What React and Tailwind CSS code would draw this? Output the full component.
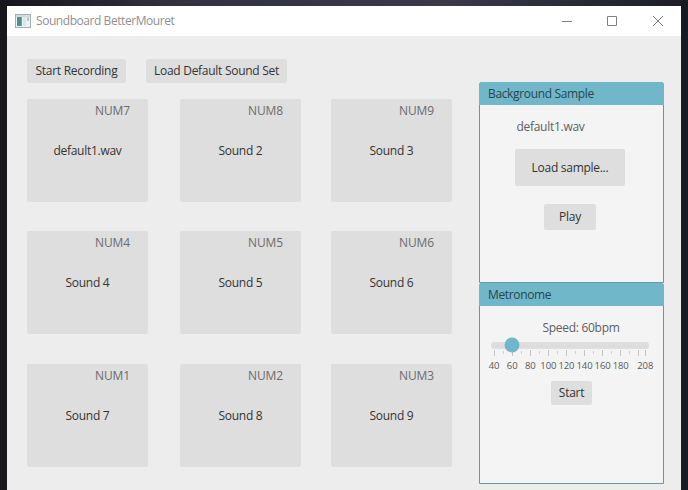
import React from "react";

const PADS = [
  ["NUM7", "default1.wav"],
  ["NUM8", "Sound 2"],
  ["NUM9", "Sound 3"],
  ["NUM4", "Sound 4"],
  ["NUM5", "Sound 5"],
  ["NUM6", "Sound 6"],
  ["NUM1", "Sound 7"],
  ["NUM2", "Sound 8"],
  ["NUM3", "Sound 9"],
];

const LABELS = ["40", "60", "80", "100", "120", "140", "160", "180"];
const MAJOR = [3, 21, 39, 57, 75, 93, 111, 129, 147, 154];
const MINOR = [12, 30, 48, 66, 84, 102, 120, 138];

function Button({ children, className = "" }) {
  return (
    <button
      className={`flex shrink-0 items-center justify-center rounded-[2px] bg-[#dedede] whitespace-nowrap text-[#333] ${className}`}
    >
      {children}
    </button>
  );
}

function TitleBar() {
  return (
    <header className="flex h-[30px] shrink-0 items-center bg-white pb-px pl-2">
      <svg width="16" height="14" viewBox="0 0 16 14" className="shrink-0">
        <rect x="0.5" y="0.5" width="15" height="13" fill="#f0f3f5" stroke="#a8adb3" />
        <rect x="1" y="1" width="14" height="2" fill="#d3dae0" />
        <rect x="2" y="3" width="5" height="9" fill="#4b9291" />
        <rect x="6" y="3" width="1" height="9" fill="#6d9db5" />
        <rect x="8" y="3" width="3" height="9" fill="#dfe6eb" />
        <rect x="12" y="3" width="2" height="4" fill="#b4c6d6" />
      </svg>
      <span className="mt-px ml-[5px] text-[12px] tracking-[-0.44px] text-[#909090]">Soundboard BetterMouret</span>
      <svg width="104" height="12" viewBox="0 0 104 12" className="mr-[17px] ml-auto" fill="none" stroke="#808080">
        <path d="M2 6.5h10M47.500 1.500h9v9h-9zM93 1l10 10M103 1l-10 10" />
      </svg>
    </header>
  );
}

function Panel({ title, children }) {
  return (
    <section className="flex h-[201px] flex-col rounded-t-[3px] border border-[#5c9ca6] bg-[#f4f4f5]">
      <h2 className="-mx-px -mt-px flex h-[23px] shrink-0 items-center rounded-t-[3px] bg-[#70b7c9] pl-[9px] tracking-[-0.35px] text-[#28464e]">
        {title}
      </h2>
      <div className="flex flex-col items-center">{children}</div>
    </section>
  );
}

function Metronome() {
  return (
    <>
      <div className="mt-[14px] ml-[19px] h-4 leading-4 text-[#606060]">Speed: 60bpm</div>
      <div className="mr-[3px] flex w-[158px] flex-col">
        <svg width="158" height="22" viewBox="0 0 158 22">
          <rect x="0" y="6" width="158" height="7" rx="3" fill="#dededf" />
          {MAJOR.map((x) => (
            <path key={x} d={`M${x + 0.5} 14v6`} stroke="#c4c4c8" />
          ))}
          {MINOR.map((x) => (
            <path key={x} d={`M${x + 0.5} 15v3`} stroke="#d4d4d8" />
          ))}
          <circle cx="21" cy="9" r="7.500" fill="#70b7c9" />
        </svg>
        <div className="mt-[2px] -mr-2 -ml-[6px] flex h-3 items-center text-[9.5px] tracking-[-0.1px] text-[#585858]">
          {LABELS.map((l) => (
            <span key={l} className="flex w-[18.100px] shrink-0 justify-center">
              {l}
            </span>
          ))}
          <span className="ml-[6.500px] flex w-[18px] justify-center">208</span>
        </div>
      </div>
      <Button className="mt-[9px] h-6 w-[41px]">Start</Button>
    </>
  );
}

export default function App() {
  return (
    <div className="flex h-[490px] w-[688px] overflow-hidden bg-[linear-gradient(90deg,#17161d_0%,#32313d_25%,#3b3948_65%,#1c1c28_100%)] font-['Open_Sans',sans-serif] text-[12px] tracking-[-0.28px]">
      <div className="w-[7px] shrink-0 bg-[#18171d]" />
      <div className="mt-[6px] flex w-[674px] shrink-0 flex-col bg-[#ededed]">
        <TitleBar />
        <main className="flex pl-5">
          <div className="w-[425px] shrink-0 pt-[23px]">
            <div className="flex gap-5">
              <Button className="h-6 w-[99px]">Start Recording</Button>
              <Button className="h-6 w-[141px]">Load Default Sound Set</Button>
            </div>
            <div className="mt-4 grid grid-cols-[123px_121px_121px] grid-rows-[103px_104px_103px] gap-x-[30px] gap-y-[29px]">
              {PADS.map(([key, name]) => (
                <button
                  key={key}
                  className="flex h-[103px] w-[121px] flex-col items-center rounded-[2px] bg-[#dedede] text-[#333]"
                >
                  <span className="mt-1 mr-[18px] h-4 self-end leading-4 tracking-[-0.1px] text-[#6c6c6c]">{key}</span>
                  <span className="mt-6 h-4 leading-4">{name}</span>
                </button>
              ))}
            </div>
          </div>
          <aside className="ml-[27px] w-[185px] shrink-0 pt-[46px]">
            <Panel title="Background Sample">
              <div className="mt-[14px] mr-[42px] h-4 leading-4 text-[#606060]">default1.wav</div>
              <Button className="mt-[14px] mr-[3px] h-[37px] w-[110px]">Load sample...</Button>
              <Button className="mt-[18px] mr-[3px] h-[26px] w-[52px]">Play</Button>
            </Panel>
            <Panel title="Metronome">
              <Metronome />
            </Panel>
          </aside>
        </main>
      </div>
      <div className="w-[7px] shrink-0 bg-[#171a20]" />
    </div>
  );
}
